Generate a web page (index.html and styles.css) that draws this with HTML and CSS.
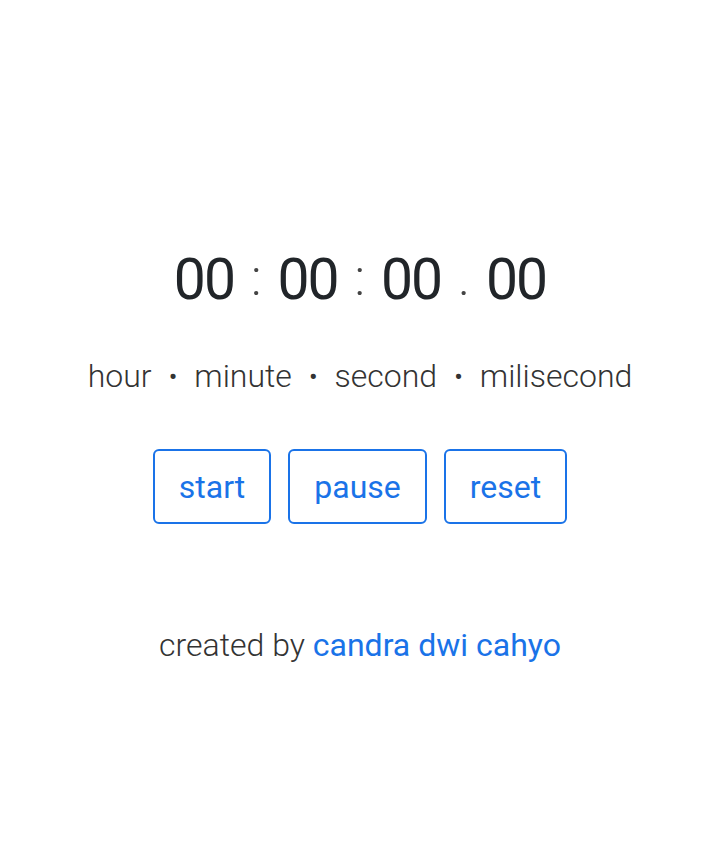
FILE: index.html
```html
<!DOCTYPE html>
<html>
<head>
<meta charset="utf-8">
<link rel="stylesheet" href="styles.css">
</head>
<body>
<main class="app">
  <div class="timer"><span class="num">00</span><span class="sep">:</span><span class="num">00</span><span class="sep">:</span><span class="num">00</span><span class="sep">.</span><span class="num">00</span></div>
  <div class="labels">hour <span class="bullet">•</span> minute <span class="bullet">•</span> second <span class="bullet">•</span> milisecond</div>
  <div class="buttons">
    <button class="btn btn-start">start</button>
    <button class="btn btn-pause">pause</button>
    <button class="btn btn-reset">reset</button>
  </div>
  <p class="credit">created by <a class="author" href="#">candra dwi cahyo</a></p>
</main>
</body>
</html>
```
FILE: styles.css
```css
html, body {
  margin: 0;
  padding: 0;
  background: #ffffff;
}
body {
  font-family: Roboto, "Noto Sans", sans-serif;
  color: #212529;
}
.app {
  display: flex;
  flex-direction: column;
  align-items: center;
  padding-top: 238px;
}
.timer {
  font-size: 57px;
  font-weight: 400;
  line-height: 80px;
  height: 80px;
  color: #212529;
  white-space: nowrap;
}
.num {
  letter-spacing: -2px;
}
.sep {
  font-weight: 300;
  margin: 0 16px 0 17px;
  color: #444;
  vertical-align: 4px;
  font-size: 50px;
}
.labels {
  margin-top: 38px;
  font-size: 32px;
  font-weight: 300;
  color: #333;
  line-height: 40px;
  word-spacing: 9px;
  white-space: nowrap;
}
.bullet {
  font-size: 28px;
  vertical-align: 1px;
}
.buttons {
  display: flex;
  gap: 17px;
  margin-top: 52px;
}
.btn {
  font-family: inherit;
  font-size: 32px;
  font-weight: 400;
  color: #1a73e8;
  background: #fff;
  border: 2px solid #1a73e8;
  border-radius: 6px;
  height: 75px;
  padding: 0 24px;
  line-height: 1;
}
.credit {
  margin: 101px 0 0;
  font-size: 32px;
  font-weight: 300;
  color: #333;
  line-height: 40px;
  white-space: nowrap;
}
.author {
  color: #1a73e8;
  font-weight: 400;
  text-decoration: none;
}
```
